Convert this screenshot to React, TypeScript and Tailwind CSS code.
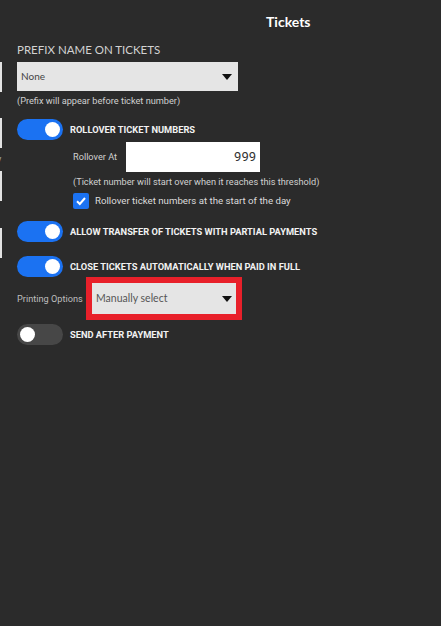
const lato = "font-['Lato','Open_Sans',sans-serif]";
const roboto = "font-['Roboto','Liberation_Sans',sans-serif]";

function Caret() {
  return (
    <svg width="10" height="6" viewBox="0 0 10 6" className="shrink-0">
      <polygon points="0,0 10,0 5,6" fill="#111" />
    </svg>
  );
}

function Toggle({ on, label }: { on: boolean; label: string }) {
  return (
    <div className="flex items-center gap-[7px]">
      <div
        className={
          on
            ? "flex h-[21px] w-[46px] items-center justify-end rounded-full bg-[#1b72f2] px-[3px]"
            : "flex h-[21px] w-[46px] items-center justify-start rounded-full bg-[#474747] px-[3px]"
        }
      >
        <div className="h-[15px] w-[15px] rounded-full bg-white" />
      </div>
      <span className={`${roboto} text-[9.3px] font-bold leading-[11px] text-[#f2f2f2]`}>
        {label}
      </span>
    </div>
  );
}

export default function App() {
  return (
    <div className="flex h-[626px] w-[441px] overflow-hidden bg-[#2b2b2b]">
      {/* edge of the panel cut off on the left */}
      <div className="flex w-[3px] shrink-0 flex-col overflow-hidden">
        <div className="mt-[62px] h-[30px] w-[2px] bg-[#e2e2e2]" />
        <div className="mt-[26px] h-[30px] w-[2px] bg-[#e2e2e2]" />
        <div className={`${roboto} mt-[6px] -ml-[3px] h-[10px] text-[9px] leading-[10px] text-[#aaa]`}>y</div>
        <div className="mt-[7px] h-[30px] w-[2px] bg-[#e2e2e2]" />
        <div className="mt-[27px] h-[30px] w-[2px] bg-[#e2e2e2]" />
      </div>

      <div className="flex flex-1 flex-col pl-[14px]">
        <div className={`${lato} pl-[249px] pt-[14px] text-[14px] font-bold leading-[16px] text-white`}>
          Tickets
        </div>

        <div className={`${lato} mt-[13px] text-[11.5px] leading-[14px] text-[#d2d2d2]`}>
          PREFIX NAME ON TICKETS
        </div>

        <div className="mt-[5px] flex h-[29px] w-[221px] items-center justify-between bg-[#e5e5e5] pl-[4px] pr-[6px]">
          <span className={`${lato} text-[10px] text-[#444]`}>None</span>
          <Caret />
        </div>

        <div className={`${roboto} mt-[4px] text-[9.2px] leading-[11px] text-[#d0d0d0]`}>
          (Prefix will appear before ticket number)
        </div>

        <div className="mt-[13px]">
          <Toggle on label="ROLLOVER TICKET NUMBERS" />
        </div>

        <div className="mt-[2px] flex items-center pl-[56px]">
          <span className={`${roboto} w-[53px] text-[9.2px] text-[#d0d0d0]`}>Rollover At</span>
          <div className="flex h-[30px] w-[134px] items-center justify-end bg-white pr-[4px]">
            <span className={`${roboto} text-[13px] text-[#333]`}>999</span>
          </div>
        </div>

        <div className={`${roboto} mt-[4px] pl-[56px] text-[9.2px] leading-[11px] text-[#d0d0d0]`}>
          (Ticket number will start over when it reaches this threshold)
        </div>

        <div className="mt-[6px] flex h-[16px] items-center gap-[6px] pl-[56px]">
          <div className="flex h-[16px] w-[16px] items-center justify-center rounded-[2px] bg-[#1b72f2]">
            <svg width="12" height="12" viewBox="0 0 12 12">
              <path d="M2 6.2 L4.8 9 L10 3" stroke="white" strokeWidth="2" fill="none" />
            </svg>
          </div>
          <span className={`${roboto} text-[9.7px] text-[#dcdcdc]`}>
            Rollover ticket numbers at the start of the day
          </span>
        </div>

        <div className="mt-[12px]">
          <Toggle on label="ALLOW TRANSFER OF TICKETS WITH PARTIAL PAYMENTS" />
        </div>

        <div className="mt-[14px]">
          <Toggle on label="CLOSE TICKETS AUTOMATICALLY WHEN PAID IN FULL" />
        </div>

        <div className="flex items-center">
          <span className={`${roboto} w-[69px] text-[9.2px] text-[#bdbdbd]`}>Printing Options</span>
          <div className="h-[43px] w-[156px] border-[6px] border-[#e8202a]">
            <div className="flex h-full items-center justify-between bg-[#e5e5e5] pl-[4px] pr-[4px]">
              <span className={`${lato} text-[10.5px] text-[#555]`}>Manually select</span>
              <Caret />
            </div>
          </div>
        </div>

        <div className="mt-[4px]">
          <Toggle on={false} label="SEND AFTER PAYMENT" />
        </div>
      </div>
    </div>
  );
}
